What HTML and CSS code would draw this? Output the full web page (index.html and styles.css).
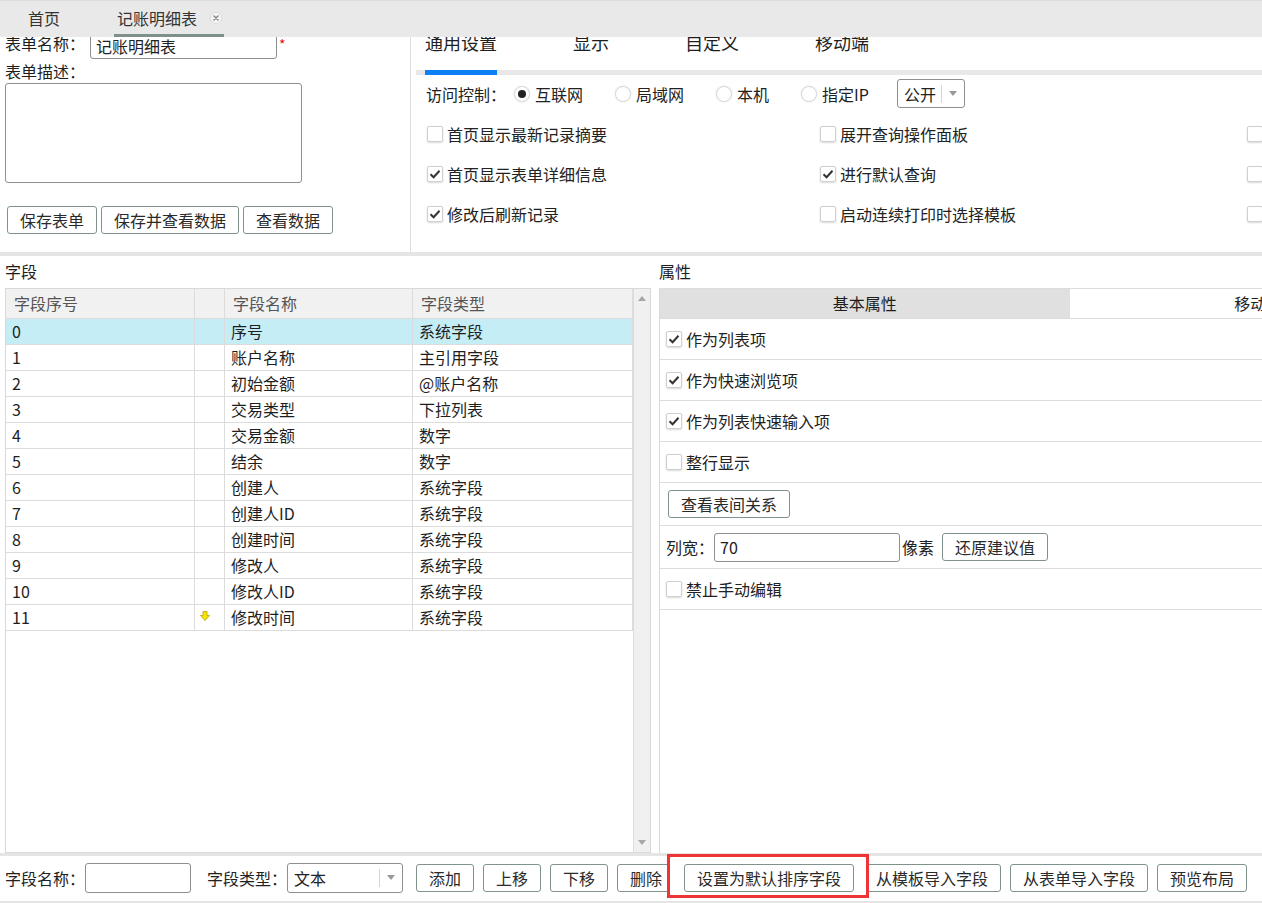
FILE: index.html
```html
<!DOCTYPE html>
<html lang="zh-CN">
<head>
<meta charset="utf-8">
<title>记账明细表</title>
<link rel="stylesheet" href="styles.css">
</head>
<body>
<div class="app">
  <div class="tabbar">
    <div class="tab">首页</div>
    <div class="tab active">记账明细表<span class="close"><svg width="12" height="12" viewBox="0 0 12 12"><circle cx="6" cy="6" r="5.6" fill="#f6f6f6" stroke="#d6d6d6" stroke-width="0.8"/><path d="M4 4 L8 8 M8 4 L4 8" stroke="#8a8a8a" stroke-width="1.6" stroke-linecap="round"/></svg></span></div>
  </div>

  <div class="top">
    <div class="form">
      <div class="form-inner">
        <div class="name-row">
          <span class="lbl">表单名称：</span>
          <div class="txt name-input">记账明细表</div>
          <span class="req">*</span>
        </div>
        <div class="lbl desc-lbl">表单描述：</div>
        <div class="desc"></div>
        <div class="form-btns">
          <button class="btn">保存表单</button>
          <button class="btn">保存并查看数据</button>
          <button class="btn">查看数据</button>
        </div>
      </div>
    </div>
    <div class="settings">
      <div class="settings-inner">
        <div class="stabs">
          <div class="stab active">通用设置</div>
          <div class="stab">显示</div>
          <div class="stab">自定义</div>
          <div class="stab">移动端</div>
        </div>
        <div class="access">
          <span class="access-lbl">访问控制：</span>
          <span class="ritem first"><span class="radio on"></span>互联网</span>
          <span class="ritem"><span class="radio"></span>局域网</span>
          <span class="ritem"><span class="radio"></span>本机</span>
          <span class="ritem"><span class="radio"></span>指定IP</span>
          <div class="select access-select"><span class="sel-text">公开</span><span class="sel-sep"></span><span class="sel-arrow"></span></div>
        </div>
        <div class="opts">
          <label class="opt"><span class="cb"></span>首页显示最新记录摘要</label>
          <label class="opt"><span class="cb"></span>展开查询操作面板</label>
          <label class="opt"><span class="cb"></span></label>
          <label class="opt"><span class="cb on"><svg width="14" height="14" viewBox="0 0 14 14"><path d="M2.5 7.2 L5.6 10.2 L11.5 3.8" fill="none" stroke="#333" stroke-width="2"/></svg></span>首页显示表单详细信息</label>
          <label class="opt"><span class="cb on"><svg width="14" height="14" viewBox="0 0 14 14"><path d="M2.5 7.2 L5.6 10.2 L11.5 3.8" fill="none" stroke="#333" stroke-width="2"/></svg></span>进行默认查询</label>
          <label class="opt"><span class="cb"></span></label>
          <label class="opt"><span class="cb on"><svg width="14" height="14" viewBox="0 0 14 14"><path d="M2.5 7.2 L5.6 10.2 L11.5 3.8" fill="none" stroke="#333" stroke-width="2"/></svg></span>修改后刷新记录</label>
          <label class="opt"><span class="cb"></span>启动连续打印时选择模板</label>
          <label class="opt"><span class="cb"></span></label>
        </div>
      </div>
    </div>
  </div>

  <div class="band"></div>

  <div class="main">
    <div class="fields">
      <div class="sec-title">字段</div>
      <div class="grid-box">
        <div class="grid">
          <div class="grow head"><div class="c">字段序号</div><div class="c"></div><div class="c">字段名称</div><div class="c">字段类型</div></div>
          <div class="grow sel"><div class="c">0</div><div class="c"></div><div class="c">序号</div><div class="c">系统字段</div></div>
          <div class="grow"><div class="c">1</div><div class="c"></div><div class="c">账户名称</div><div class="c">主引用字段</div></div>
          <div class="grow"><div class="c">2</div><div class="c"></div><div class="c">初始金额</div><div class="c">@账户名称</div></div>
          <div class="grow"><div class="c">3</div><div class="c"></div><div class="c">交易类型</div><div class="c">下拉列表</div></div>
          <div class="grow"><div class="c">4</div><div class="c"></div><div class="c">交易金额</div><div class="c">数字</div></div>
          <div class="grow"><div class="c">5</div><div class="c"></div><div class="c">结余</div><div class="c">数字</div></div>
          <div class="grow"><div class="c">6</div><div class="c"></div><div class="c">创建人</div><div class="c">系统字段</div></div>
          <div class="grow"><div class="c">7</div><div class="c"></div><div class="c">创建人ID</div><div class="c">系统字段</div></div>
          <div class="grow"><div class="c">8</div><div class="c"></div><div class="c">创建时间</div><div class="c">系统字段</div></div>
          <div class="grow"><div class="c">9</div><div class="c"></div><div class="c">修改人</div><div class="c">系统字段</div></div>
          <div class="grow"><div class="c">10</div><div class="c"></div><div class="c">修改人ID</div><div class="c">系统字段</div></div>
          <div class="grow"><div class="c">11</div><div class="c icon-cell"><svg width="10" height="11" viewBox="0 0 10 11"><path d="M3 0.5 H7 V4.5 H9.5 L5 9.5 L0.5 4.5 H3 Z" fill="#f7e600" stroke="#b8a200" stroke-width="0.8"/></svg></div><div class="c">修改时间</div><div class="c">系统字段</div></div>
        </div>
        <div class="vscroll">
          <span class="arr up"></span>
          <span class="arr down"></span>
        </div>
      </div>
    </div>

    <div class="props">
      <div class="sec-title">属性</div>
      <div class="pbox">
        <div class="ptabs">
          <div class="ptab active">基本属性</div>
          <div class="ptab">移动端属性</div>
        </div>
        <div class="prow"><span class="cb on"><svg width="14" height="14" viewBox="0 0 14 14"><path d="M2.5 7.2 L5.6 10.2 L11.5 3.8" fill="none" stroke="#333" stroke-width="2"/></svg></span>作为列表项</div>
        <div class="prow"><span class="cb on"><svg width="14" height="14" viewBox="0 0 14 14"><path d="M2.5 7.2 L5.6 10.2 L11.5 3.8" fill="none" stroke="#333" stroke-width="2"/></svg></span>作为快速浏览项</div>
        <div class="prow"><span class="cb on"><svg width="14" height="14" viewBox="0 0 14 14"><path d="M2.5 7.2 L5.6 10.2 L11.5 3.8" fill="none" stroke="#333" stroke-width="2"/></svg></span>作为列表快速输入项</div>
        <div class="prow"><span class="cb"></span>整行显示</div>
        <div class="prow tall"><button class="btn">查看表间关系</button></div>
        <div class="prow tall"><span class="wlbl">列宽：</span><div class="txt width-input">70</div><span class="unit">像素</span><button class="btn restore">还原建议值</button></div>
        <div class="prow"><span class="cb"></span>禁止手动编辑</div>
      </div>
    </div>
  </div>

  <div class="bottombar">
    <span class="blbl">字段名称：</span>
    <div class="txt fname-input"></div>
    <span class="blbl type-lbl">字段类型：</span>
    <div class="select type-select"><span class="sel-text">文本</span><span class="sel-sep"></span><span class="sel-arrow"></span></div>
    <div class="bbtns">
      <button class="btn">添加</button>
      <button class="btn">上移</button>
      <button class="btn">下移</button>
      <button class="btn">删除</button>
      <span class="hl"><button class="btn">设置为默认排序字段</button></span>
      <button class="btn">从模板导入字段</button>
      <button class="btn">从表单导入字段</button>
      <button class="btn">预览布局</button>
    </div>
  </div>
</div>
</body>
</html>
```

FILE: styles.css
```css
* { box-sizing: border-box; }

html, body {
  margin: 0;
  padding: 0;
}

body {
  width: 1262px;
  height: 903px;
  overflow: hidden;
  background: #fff;
  color: #222;
  font-family: "Noto Sans CJK SC", "Microsoft YaHei", sans-serif;
  font-size: 16px;
  line-height: 20px;
}

.app {
  width: 1262px;
  height: 903px;
  display: flex;
  flex-direction: column;
}

/* ---------- top tab bar ---------- */
.tabbar {
  height: 37px;
  flex: none;
  display: flex;
  background: #e9e9e9;
  border-top: 1px solid #dcdcdc;
}

.tab {
  display: flex;
  align-items: center;
  padding: 0 3px;
  border-bottom: 3px solid transparent;
  color: #333;
}

.tab:first-child { margin-left: 25px; }

.tab.active {
  margin-left: 51px;
  padding-right: 2px;
  border-bottom-color: #7d918a;
}

.close {
  display: flex;
  margin-left: 13px;
}

/* ---------- top area ---------- */
.top {
  height: 215px;
  flex: none;
  display: flex;
  overflow: hidden;
}

.form {
  width: 411px;
  flex: none;
  border-right: 1px solid #dedede;
  padding-left: 5px;
}

.form-inner { margin-top: -4px; }

.name-row {
  display: flex;
  align-items: flex-start;
  height: 26px;
}

.lbl { color: #1e1e1e; }

.name-row .lbl { margin-top: 0; width: 80px; }

.txt {
  border: 1px solid #8f8f8f;
  border-radius: 3px;
  background: #fff;
  color: #222;
  padding-left: 5px;
  display: flex;
  align-items: center;
}

.name-input {
  margin-left: 5px;
  width: 187px;
  height: 26px;
}

.req {
  color: #f01010;
  font-size: 14px;
  line-height: 14px;
  margin-left: 2px;
  margin-top: 4px;
}

.desc-lbl { margin-top: 2px; }

.desc {
  margin-top: 2px;
  width: 297px;
  height: 100px;
  border: 1px solid #8f8f8f;
  border-radius: 3px;
}

.form-btns {
  display: flex;
  gap: 4px;
  margin-top: 23px;
  margin-left: 2px;
}

.btn {
  height: 28px;
  padding: 0 12px;
  border: 1px solid #7f928b;
  border-radius: 3px;
  background: #fff;
  color: #2a2a2a;
  font-family: inherit;
  font-size: 16px;
  line-height: 20px;
  white-space: nowrap;
}

.settings {
  flex: 1;
  padding-left: 5px;
  min-width: 0;
}

.settings-inner { margin-top: -4px; }

.stabs {
  display: flex;
  gap: 76px;
  border-bottom: 5px solid #e8e8e8;
  padding-left: 9px;
  font-size: 18px;
}

.stab {
  line-height: 19px;
  padding-bottom: 18px;
  margin-bottom: -5px;
  border-bottom: 5px solid transparent;
  color: #1e1e1e;
  white-space: nowrap;
}

.stab.active { border-bottom-color: #0c7ff5; }

.access {
  height: 37px;
  display: flex;
  align-items: center;
  padding-left: 10px;
}

.access-lbl { width: 80px; }

.ritem {
  display: flex;
  align-items: center;
  gap: 5px;
  margin-left: 32px;
}

.ritem.first { margin-left: 8px; }

.radio {
  width: 16px;
  height: 16px;
  border-radius: 50%;
  border: 1px solid #d9d9d9;
  box-shadow: 0 0 2px rgba(0, 0, 0, 0.12);
  background: #fff;
  display: flex;
  align-items: center;
  justify-content: center;
}

.radio.on::after {
  content: "";
  width: 8px;
  height: 8px;
  border-radius: 50%;
  background: #222;
}

.select {
  display: flex;
  align-items: center;
  height: 30px;
  border: 1px solid #8f8f8f;
  border-radius: 3px;
  background: #fff;
}

.access-select {
  margin-left: 28px;
  width: 68px;
  height: 29px;
}

.sel-text { padding-left: 6px; flex: 1; }

.sel-sep {
  width: 1px;
  height: 18px;
  background: #d5d5d5;
}

.sel-arrow {
  width: 0;
  height: 0;
  border-left: 4px solid transparent;
  border-right: 4px solid transparent;
  border-top: 5px solid #9a9a9a;
  margin: 0 7px 0 7px;
}

.opts {
  display: grid;
  grid-template-columns: 393px 427px 100px;
  grid-auto-rows: 40px;
  padding-left: 11px;
  margin-top: 2px;
}

.opt {
  display: flex;
  align-items: center;
  gap: 4px;
  white-space: nowrap;
}

.cb {
  width: 16px;
  height: 16px;
  flex: none;
  border: 1px solid #cfcfcf;
  border-radius: 2px;
  background: #fff;
  box-shadow: 0 1px 2px rgba(0, 0, 0, 0.15);
  display: flex;
  align-items: center;
  justify-content: center;
}

.band {
  height: 4px;
  flex: none;
  background: #e5e5e5;
}

/* ---------- main ---------- */
.main {
  height: 597px;
  flex: none;
  display: flex;
}

.sec-title {
  padding: 5px 0 7px;
  line-height: 20px;
  color: #1e1e1e;
}

.fields {
  width: 659px;
  flex: none;
}

.fields .sec-title { padding-left: 5px; }

.grid-box {
  margin-left: 5px;
  width: 646px;
  height: 565px;
  border: 1px solid #d8d8d8;
  display: flex;
}

.grid { width: 627px; flex: none; }

.grow {
  display: grid;
  grid-template-columns: 189px 30px 188px 220px;
  height: 26px;
  border-bottom: 1px solid #dcdcdc;
}

.grow .c {
  border-right: 1px solid #dcdcdc;
  padding-left: 6px;
  padding-bottom: 1px;
  display: flex;
  align-items: center;
  white-space: nowrap;
  color: #1e1e1e;
}

.grow.head {
  height: 30px;
  background: #f1f1f1;
}

.grow.head .c {
  color: #555;
  padding-left: 8px;
}

.grow.sel { background: #c5edf6; }

.grow .icon-cell {
  padding-left: 5px;
  padding-bottom: 2px;
}

.vscroll {
  width: 17px;
  flex: none;
  background: #f0f0f0;
  border-left: 1px solid #dcdcdc;
  display: flex;
  flex-direction: column;
  justify-content: space-between;
  align-items: center;
  padding: 7px 0 7px 0;
}

.arr {
  width: 0;
  height: 0;
  border-left: 4px solid transparent;
  border-right: 4px solid transparent;
}

.arr.up { border-bottom: 5px solid #a6a6a6; }
.arr.down { border-top: 5px solid #a6a6a6; }

.props {
  flex: 1;
  min-width: 0;
}

.pbox {
  width: 820px;
  height: 565px;
  border-left: 1px solid #d8d8d8;
  border-top: 1px solid #dcdcdc;
}

.ptabs {
  display: flex;
  height: 30px;
  border-bottom: 1px solid #dcdcdc;
}

.ptab {
  width: 410px;
  display: flex;
  align-items: center;
  justify-content: center;
  padding-bottom: 1px;
  color: #1e1e1e;
}

.ptab.active { background: #e0e0e0; }

.prow {
  height: 41px;
  border-bottom: 1px solid #dcdcdc;
  display: flex;
  align-items: center;
  gap: 4px;
  padding-left: 6px;
  white-space: nowrap;
}

.prow.tall { height: 43px; gap: 0; }

.prow.tall .btn { margin-left: 2px; }

.wlbl { width: 48px; }

.width-input {
  width: 186px;
  height: 29px;
  padding-left: 5px;
}

.unit { margin-left: 2px; }

.prow.tall .btn.restore { margin-left: 8px; }

/* ---------- bottom bar ---------- */
.bottombar {
  height: 50px;
  flex: none;
  border-top: 3px solid #e5e5e5;
  border-bottom: 2px solid #e5e5e5;
  display: flex;
  align-items: center;
  padding-left: 5px;
  padding-bottom: 2px;
}

.blbl { width: 80px; flex: none; }

.fname-input {
  width: 106px;
  height: 30px;
}

.type-lbl { margin-left: 16px; }

.type-select { width: 116px; }

.bbtns {
  display: flex;
  gap: 9px;
  margin-left: 13px;
}

.hl {
  position: relative;
  display: flex;
}

.hl::before {
  content: "";
  position: absolute;
  left: -17px;
  right: -15px;
  top: -10px;
  bottom: -6px;
  border: 3px solid #ee3434;
  background: #fff;
}

.hl .btn {
  position: relative;
}
```
